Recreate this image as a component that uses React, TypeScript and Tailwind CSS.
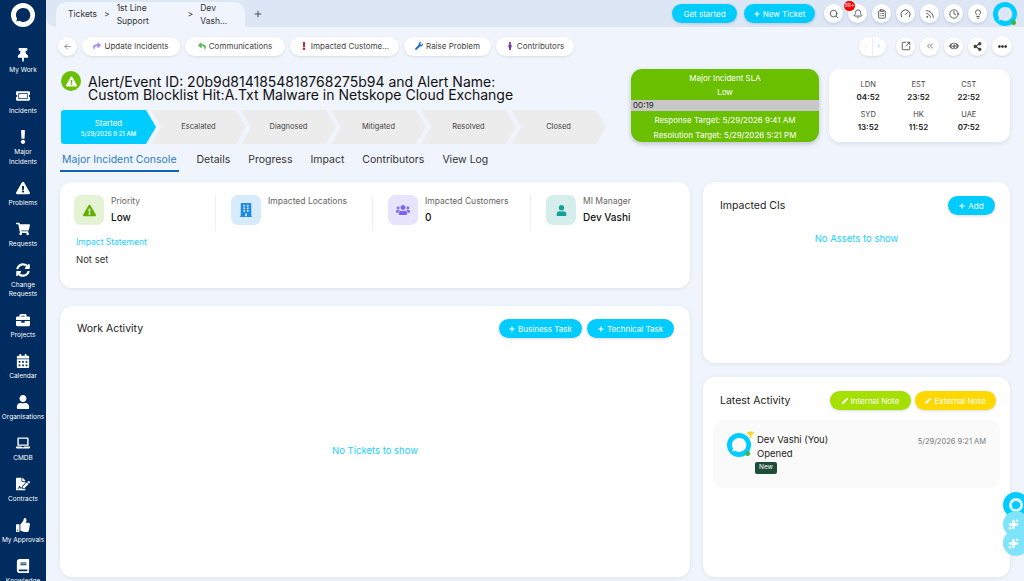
import React from "react";
import {
  FaBook,
  FaBriefcase,
  FaBuilding,
  FaCalendarAlt,
  FaEllipsisH,
  FaExclamation,
  FaExclamationTriangle,
  FaEye,
  FaFileSignature,
  FaLaptop,
  FaMale,
  FaPen,
  FaPlus,
  FaReply,
  FaShare,
  FaShareAlt,
  FaShoppingCart,
  FaSyncAlt,
  FaThumbsUp,
  FaThumbtack,
  FaTicketAlt,
  FaTrophy,
  FaUser,
  FaUsers,
  FaWrench,
} from "react-icons/fa";
import {
  Bell,
  ChevronLeft,
  ChevronRight,
  ChevronsLeft,
  ClipboardList,
  Clock,
  Gauge,
  Lightbulb,
  Rss,
  Search,
  Sparkles,
  ArrowLeft,
  Plus,
  SquareArrowOutUpRight,
} from "lucide-react";

const navItems = [
  { icon: FaThumbtack, label: ["My Work"] },
  { icon: FaTicketAlt, label: ["Incidents"] },
  { icon: FaExclamation, label: ["Major", "Incidents"] },
  { icon: FaExclamationTriangle, label: ["Problems"] },
  { icon: FaShoppingCart, label: ["Requests"] },
  { icon: FaSyncAlt, label: ["Change", "Requests"] },
  { icon: FaBriefcase, label: ["Projects"] },
  { icon: FaCalendarAlt, label: ["Calendar"] },
  { icon: FaUser, label: ["Organisations"] },
  { icon: FaLaptop, label: ["CMDB"] },
  { icon: FaFileSignature, label: ["Contracts"] },
  { icon: FaThumbsUp, label: ["My Approvals"] },
  { icon: FaBook, label: ["Knowledge"] },
];

const actions = [
  { icon: FaShare, color: "text-[#a78bfa]", label: "Update Incidents", w: "w-[98px]" },
  { icon: FaReply, color: "text-[#5cb85c]", label: "Communications", w: "w-[100px]" },
  { icon: FaExclamation, color: "text-[#d9202c]", label: "Impacted Custome...", w: "w-[109px]" },
  { icon: FaWrench, color: "text-[#1f6fc4]", label: "Raise Problem", w: "w-[87px]" },
  { icon: FaMale, color: "text-[#6b2fa0]", label: "Contributors", w: "w-[78px]" },
];

const steps = ["Escalated", "Diagnosed", "Mitigated", "Resolved", "Closed"];
const tabs = ["Details", "Progress", "Impact", "Contributors", "View Log"];
const clocks = [
  ["LDN", "04:52"],
  ["EST", "23:52"],
  ["CST", "22:52"],
  ["SYD", "13:52"],
  ["HK", "11:52"],
  ["UAE", "07:52"],
];

function Logo({ color, size }: { color: string; size: number }) {
  return (
    <svg width={size} height={size} viewBox="0 0 24 24">
      <path
        fillRule="evenodd"
        fill={color}
        d="M12 0a12 12 0 1 1 0 24 12 12 0 0 1 0-24zm0 5a7 7 0 0 0-6 10.6L5.4 18.4 8.4 17.800A7 7 0 1 0 12 5z"
      />
    </svg>
  );
}

function RoundIcon({ children, big }: { children: React.ReactNode; big?: boolean }) {
  return (
    <div
      className={`flex items-center justify-center rounded-full bg-white text-[#444] shadow-[0_1px_3px_rgba(0,0,0,0.12)] ${
        big ? "h-[20px] w-[20px]" : "h-[19px] w-[19px]"
      }`}
    >
      {children}
    </div>
  );
}

function Pill({ children, className }: { children: React.ReactNode; className: string }) {
  return (
    <div
      className={`flex h-[19px] items-center justify-center gap-[3px] rounded-full text-[8px] text-white shadow-[0_1px_3px_rgba(0,0,0,0.15)] ${className}`}
    >
      {children}
    </div>
  );
}

function Tile({
  bg,
  icon,
  label,
  value,
  divider,
}: {
  bg: string;
  icon: React.ReactNode;
  label: string;
  value?: string;
  divider?: boolean;
}) {
  return (
    <div className="relative flex h-[30px] gap-[7px]">
      <div className={`flex h-[30px] w-[30px] shrink-0 items-center justify-center rounded-[7px] ${bg}`}>{icon}</div>
      <div>
        <div className="text-[8.5px] leading-[12px] text-[#666]">{label}</div>
        {value && <div className="mt-[3px] text-[10px] leading-[14px] font-medium text-[#111]">{value}</div>}
      </div>
      {divider && <div className="absolute top-0 right-[15px] h-[36px] w-px bg-[#f0f0f0]" />}
    </div>
  );
}

export default function App() {
  return (
    <div className="flex h-[581px] w-[1024px] overflow-hidden bg-[#eff4fd] font-[Inter,sans-serif] text-[#222]">
      {/* sidebar */}
      <div className="flex h-full w-[46px] shrink-0 flex-col items-center overflow-hidden bg-[#002c5f] text-white">
        <div className="mt-[3px] mb-[20px]">
          <Logo color="#fff" size={24} />
        </div>
        {navItems.map((item) => {
          const Icon = item.icon;
          return (
            <div key={item.label[0]} className="flex h-auto shrink-0 flex-col items-center pb-[12.5px]">
              <div className="flex h-[16px] items-center justify-center">
                <Icon size={14} />
              </div>
              <div className="mt-[3px] text-center text-[6.5px] leading-[9.5px] whitespace-nowrap">
                {item.label.map((l) => (
                  <div key={l}>{l}</div>
                ))}
              </div>
            </div>
          );
        })}
      </div>

      {/* main */}
      <div className="relative flex min-w-0 flex-1 flex-col">
        {/* top bar */}
        <div className="flex h-[27px] shrink-0 items-center rounded-bl-[10px] bg-[#dce6f5] pr-[7px] pl-[10px]">
          <div className="mt-[2px] flex h-[25px] w-[189px] items-center gap-[7px] self-start rounded-t-[10px] bg-[#eff4fd] pl-[12px] text-[8.5px] text-[#333]">
            <span>Tickets</span>
            <span>&gt;</span>
            <span>1st Line Support</span>
            <span>&gt;</span>
            <span>Dev Vash...</span>
          </div>
          <Plus size={10} className="ml-[8px] text-[#333]" />
          <Pill className="ml-auto w-[65px] bg-[#00ccff]">Get started</Pill>
          <Pill className="ml-[7px] w-[71px] bg-[#00ccff]">
            <FaPlus size={6} />
            New Ticket
          </Pill>
          <div className="ml-[9px] flex items-center gap-[5px]">
            <RoundIcon>
              <Search size={10} />
            </RoundIcon>
            <div className="relative">
              <RoundIcon>
                <Bell size={10} />
              </RoundIcon>
              <div className="absolute -top-[3px] -left-[4px] flex h-[10px] w-[11px] items-center justify-center rounded-full bg-[#f00] text-[5px] text-white">
                99+
              </div>
            </div>
            <RoundIcon>
              <ClipboardList size={10} />
            </RoundIcon>
            <RoundIcon>
              <Gauge size={11} />
            </RoundIcon>
            <RoundIcon>
              <Rss size={10} />
            </RoundIcon>
            <RoundIcon>
              <Clock size={10} />
            </RoundIcon>
            <RoundIcon>
              <Lightbulb size={10} />
            </RoundIcon>
          </div>
          <div className="relative ml-[6px]">
            <Logo color="#00ccff" size={24} />
            <div className="absolute right-[1px] bottom-[1px] h-[5px] w-[5px] rounded-full bg-[#3fb54a]" />
          </div>
        </div>

        {/* actions */}
        <div className="mt-[9px] flex h-[20px] shrink-0 items-center pr-[12px] pl-[12px]">
          <RoundIcon>
            <ArrowLeft size={9} className="text-[#777]" />
          </RoundIcon>
          <div className="ml-[5px] flex gap-[5px]">
            {actions.map((a) => {
              const Icon = a.icon;
              return (
                <div
                  key={a.label}
                  className={`flex h-[19px] items-center justify-center gap-[3px] rounded-full bg-white text-[8px] text-[#444] shadow-[0_1px_3px_rgba(0,0,0,0.1)] ${a.w}`}
                >
                  <Icon size={8} className={a.color} />
                  {a.label}
                </div>
              );
            })}
          </div>
          <div className="ml-auto flex items-center gap-[5px]">
            <div className="mr-[5px] flex h-[19px] w-[27px] items-center justify-center rounded-full bg-white shadow-[0_1px_3px_rgba(0,0,0,0.1)]">
              <ChevronLeft size={6} className="text-[#ccc]" />
              <div className="mx-[3px] h-full w-px bg-[#eee]" />
              <ChevronRight size={6} className="text-[#22cfff]" />
            </div>
            <RoundIcon>
              <SquareArrowOutUpRight size={10} />
            </RoundIcon>
            <RoundIcon>
              <ChevronsLeft size={10} className="text-[#666]" />
            </RoundIcon>
            <RoundIcon>
              <FaEye size={10} className="text-[#666]" />
            </RoundIcon>
            <RoundIcon>
              <FaShareAlt size={9} />
            </RoundIcon>
            <RoundIcon big>
              <FaEllipsisH size={9} className="text-[#222]" />
            </RoundIcon>
          </div>
        </div>

        {/* ticket header */}
        <div className="mt-[13px] flex h-[75px] shrink-0 pr-[14px] pl-[15px]">
          <div className="w-[570px] shrink-0">
            <div className="flex h-[41px] items-start">
              <div className="mt-[2px] flex h-[20px] w-[20px] items-center justify-center rounded-full bg-[#6abf00] text-white">
                <FaExclamationTriangle size={11} />
              </div>
              <div className="mt-[6px] ml-[7px] w-[440px] text-[14px] leading-[13px] text-[#111]">
                Alert/Event ID: 20b9d8141854818768275b94 and Alert Name: Custom Blocklist Hit:A.Txt Malware in Netskope
                Cloud Exchange
              </div>
            </div>
            <div className="flex">
              <div className="flex h-[34px] w-[95px] flex-col items-center justify-center rounded-l-[3px] bg-[#00ccff] text-white [clip-path:polygon(0_0,85px_0,95px_50%,85px_100%,0_100%)]">
                <div className="text-[8px] leading-[12px]">Started</div>
                <div className="text-[6px] leading-[9px] font-medium">5/29/2026 9:21 AM</div>
              </div>
              {steps.map((s) => (
                <div
                  key={s}
                  className="-ml-[5px] flex h-[34px] w-[95px] items-center justify-center bg-[#ececec] text-[7.5px] text-[#444] [clip-path:polygon(0_0,85px_0,95px_50%,85px_100%,0_100%,10px_50%)]"
                >
                  {s}
                </div>
              ))}
            </div>
          </div>
          <div className="flex h-[73px] w-[188px] shrink-0 flex-col items-center overflow-hidden rounded-[11px] bg-[#6abf00] text-[8px] text-white shadow-[0_2px_5px_rgba(0,0,0,0.2)]">
            <div className="mt-[4px] leading-[11px]">Major Incident SLA</div>
            <div className="mt-[3px] leading-[11px]">Low</div>
            <div className="mt-[2px] h-[11px] w-full bg-[#c8c8c8] pl-[2px] text-[8px] leading-[11px] text-[#222]">00:19</div>
            <div className="mt-[4px] leading-[11px]">Response Target: 5/29/2026 9:41 AM</div>
            <div className="mt-[4px] leading-[11px]">Resolution Target: 5/29/2026 5:21 PM</div>
          </div>
          <div className="ml-[10px] grid h-[73px] w-[181px] shrink-0 grid-cols-3 content-center gap-y-[6px] rounded-[11px] bg-white pr-[16px] pl-[14px] text-center shadow-[0_2px_5px_rgba(0,0,0,0.08)]">
            {clocks.map(([zone, time]) => (
              <div key={zone}>
                <div className="text-[7.5px] leading-[12px] text-[#444]">{zone}</div>
                <div className="text-[8px] leading-[12px] font-semibold text-[#222]">{time}</div>
              </div>
            ))}
          </div>
        </div>

        {/* tabs */}
        <div className="mt-[6px] flex h-[22px] shrink-0 items-start gap-[18px] pl-[14px] text-[10.5px] leading-[20px] text-[#333]">
          <div className="h-[22px] border-b-2 border-[#0f62ae] px-[2px] text-[#2d7fc1]">Major Incident Console</div>
          {tabs.map((t) => (
            <div key={t}>{t}</div>
          ))}
        </div>

        {/* content */}
        <div className="mt-[10px] flex min-h-0 flex-1 gap-[13px] pr-[14px] pb-[4px] pl-[14px]">
          <div className="flex w-[630px] shrink-0 flex-col gap-[18px]">
            <div className="h-[106px] shrink-0 rounded-[12px] bg-white pt-[13px] pl-[14px] shadow-[0_1px_4px_rgba(0,0,0,0.08)]">
              <div className="grid grid-cols-[157px_157px_158px_1fr]">
                <Tile
                  bg="bg-[#e3f3d3]"
                  icon={<FaExclamationTriangle size={13} className="text-[#5fb000]" />}
                  label="Priority"
                  value="Low"
                  divider
                />
                <Tile
                  bg="bg-[#d6ebfb]"
                  icon={<FaBuilding size={14} className="text-[#1e88e5]" />}
                  label="Impacted Locations"
                  divider
                />
                <Tile
                  bg="bg-[#e8e3ff]"
                  icon={<FaUsers size={14} className="text-[#7b61ff]" />}
                  label="Impacted Customers"
                  value="0"
                  divider
                />
                <Tile
                  bg="bg-[#d5eeec]"
                  icon={<FaUser size={11} className="text-[#12a19a]" />}
                  label="MI Manager"
                  value="Dev Vashi"
                />
              </div>
              <div className="mt-[11px] ml-[2px] text-[8.5px] leading-[12px] text-[#22cfff]">Impact Statement</div>
              <div className="mt-[5px] ml-[2px] text-[9.5px] leading-[14px] text-[#333]">Not set</div>
            </div>
            <div className="flex min-h-0 flex-1 flex-col rounded-[12px] bg-white shadow-[0_1px_4px_rgba(0,0,0,0.08)]">
              <div className="flex items-center justify-between pt-[13px] pr-[16px] pl-[17px]">
                <div className="text-[10.5px] text-[#222]">Work Activity</div>
                <div className="flex gap-[5px]">
                  <Pill className="w-[83px] bg-[#00ccff]">
                    <FaPlus size={6} />
                    Business Task
                  </Pill>
                  <Pill className="w-[87px] bg-[#00ccff]">
                    <FaPlus size={6} />
                    Technical Task
                  </Pill>
                </div>
              </div>
              <div className="flex flex-1 items-center justify-center pb-[13px] text-[9.5px] text-[#22cfff]">
                No Tickets to show
              </div>
            </div>
          </div>
          <div className="flex min-w-0 flex-1 flex-col gap-[14px]">
            <div className="h-[181px] shrink-0 rounded-[12px] bg-white shadow-[0_1px_4px_rgba(0,0,0,0.08)]">
              <div className="flex items-center justify-between pt-[14px] pr-[15px] pl-[17px]">
                <div className="text-[10.5px] text-[#222]">Impacted CIs</div>
                <Pill className="w-[47px] bg-[#00ccff]">
                  <FaPlus size={6} />
                  Add
                </Pill>
              </div>
              <div className="mt-[17px] text-center text-[9.5px] leading-[14px] text-[#22cfff]">No Assets to show</div>
            </div>
            <div className="min-h-0 flex-1 rounded-[12px] bg-white shadow-[0_1px_4px_rgba(0,0,0,0.08)]">
              <div className="flex items-center pt-[14px] pr-[14px] pl-[17px]">
                <div className="text-[10.5px] text-[#222]">Latest Activity</div>
                <div className="ml-auto flex gap-[4px]">
                  <Pill className="w-[81px] bg-[#a5e000]">
                    <FaPen size={6} />
                    Internal Note
                  </Pill>
                  <Pill className="w-[81px] bg-[#ffd800]">
                    <FaPen size={6} />
                    External Note
                  </Pill>
                </div>
              </div>
              <div className="mx-[10px] mt-[10px] flex h-[68px] rounded-[11px] bg-[#fafafa] pt-[13px] pr-[14px] pl-[14px]">
                <div className="relative h-[24px] w-[24px] shrink-0">
                  <Logo color="#00ccff" size={24} />
                  <div className="absolute right-[1px] bottom-[1px] h-[5px] w-[5px] rounded-full bg-[#3fb54a]" />
                  <FaTrophy size={7} className="absolute -top-[2px] -right-[3px] text-[#ffd21f]" />
                </div>
                <div className="ml-[6px] text-[#222]">
                  <div className="text-[9.5px] leading-[14px]">Dev Vashi (You)</div>
                  <div className="text-[9.5px] leading-[14px]">Opened</div>
                  <div className="-ml-[2px] mt-[1px] flex h-[12px] w-[22px] items-center justify-center rounded-[2px] bg-[#1e4d38] text-[6.5px] text-white">
                    New
                  </div>
                </div>
                <div className="ml-auto pt-[1px] text-[7.5px] leading-[16px] text-[#777]">5/29/2026 9:21 AM</div>
              </div>
            </div>
          </div>
        </div>

        {/* floating helpers */}
        <div className="absolute top-[492px] left-[957px] flex flex-col -space-y-[7px]">
          <div className="flex h-[26px] w-[26px] items-center justify-center rounded-full bg-[#00ccff]">
            <Logo color="#dff6ff" size={14} />
          </div>
          <div className="flex h-[26px] w-[26px] items-center justify-center rounded-full bg-[#7fe3fa] pr-[6px] text-white">
            <Sparkles size={11} fill="white" />
          </div>
          <div className="flex h-[26px] w-[26px] items-center justify-center rounded-full bg-[#7fe3fa] pr-[6px] text-white">
            <Sparkles size={11} fill="white" />
          </div>
        </div>
      </div>
    </div>
  );
}
